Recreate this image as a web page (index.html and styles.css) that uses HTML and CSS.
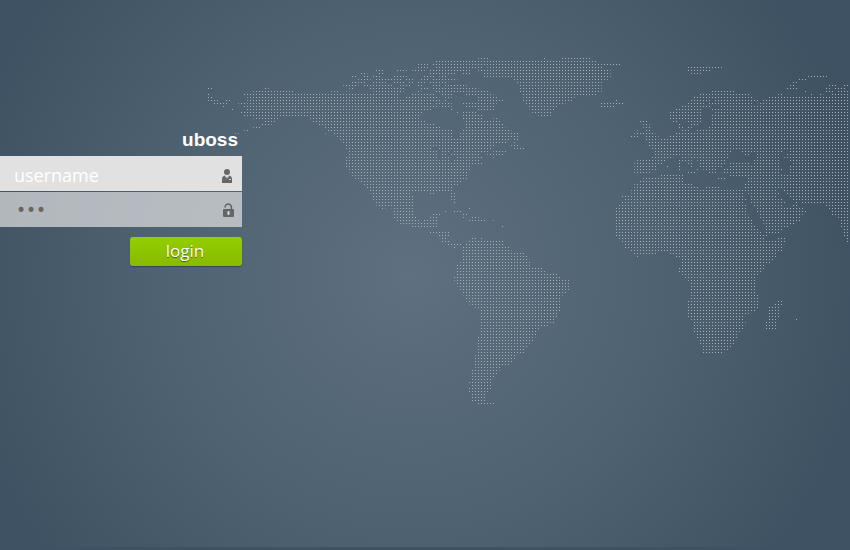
FILE: index.html
```html
<!DOCTYPE html>
<html lang="en">
<head>
<meta charset="utf-8">
<title>uboss</title>
<link rel="stylesheet" href="styles.css">
</head>
<body>
<main class="page">
<svg class="map" width="850" height="550" viewBox="0 0 850 550" aria-hidden="true">
<defs>
<pattern id="dots" width="3" height="3" patternUnits="userSpaceOnUse"><rect x="1" y="1" width="1" height="1" fill="#a3afb8"/></pattern>
<mask id="land" maskUnits="userSpaceOnUse" x="0" y="0" width="850" height="550">
<!-- Alaska and the west coast -->
<g transform="translate(200 50) scale(.333333)">
<path class="area" d="M130 129H600V525H637L610 520 592 514 583 504V478L560 470H583L546 478 527 465 518 450 518 436 509 428 500 412 491 403 482 396 464 388 455 374 446 364 437 352V318L446 310V302L437 294 428 280 419 270 412 260 400 252 385 244 374 234 356 225 338 216 328 201H131V184H140V174H131V165H142V138H130Z"/>
<path class="run" d="M24 115H36M24 133H27M24 142H36M24 151H54M72 151H92M42 160H82M69 169H73M96 178H100M115 160H135M123 187H140M160 124H281M195 115H206M160 205H235M195 214H228M186 223H215M160 232H181M133 241H145M106 250H116M376 250H380M394 124H418M520 124H575M592 124H610M440 124H448M430 106H475M448 115H460M455 97H500M455 79H470M482 70H502M475 88H512M490 79H505M528 61H550M536 70H550M518 79H545M528 88H570M515 97H550M492 106H580M510 115H600M590 61H606M600 88H606"/>
</g>
<!-- Canada, Greenland, the United States and Mexico -->
<g transform="translate(400 50) scale(.333333)">
<path class="area" d="M323 66 340 30H485V21H572L575 30 605 39V48L608 55 620 57 632 60V86L610 93 605 101V125L585 138H528L515 155 480 165 460 182 450 200H430L400 191 385 174 368 155 370 142 360 126 352 100 340 92V84H325Z"/>
<path class="run" d="M235 25H265M430 25H440M108 34H365M54 43H90M99 43H350M600 43H662M54 52H90M108 52H120M126 52H250M262 52H345M0 61H20M36 61H38M45 61H74M90 61H210M235 61H345M90 70H170M189 70H210M250 70H345M-20 79H20M72 79H102M118 79H140M250 79H340M-40 88H0M18 88H40M63 88H84M99 88H172M-65 97H-40M-20 97H12M27 97H40M54 97H80M90 97H145M0 106H30M54 106H70M99 106H120M135 106H200M-65 115H-20M0 115H18M63 115H84M99 115H235M-35 124H4M54 124H64M108 124H200M207 124H270M-60 133H0M36 133H102M126 133H160M198 133H280M-80 142H0M18 142H118M135 142H155M228 142H292M-80 151H60M63 151H122M130 151H142M234 151H312M-80 160H100M108 160H155M189 160H290M-80 169H118M126 169H155M198 169H288M-80 178H94M150 178H158M232 178H282M-80 187H66M171 187H175M189 187H230M-80 196H57M189 196H246M-80 205H57M189 205H250M280 205H294M-80 214H76M198 214H306M-80 223H103M198 223H312M-80 232H122M198 232H316M-80 241H156M189 241H334M-80 250H156M180 250H354M-80 259H156M180 259H354M-80 268H330M342 268H357M-80 277H322M342 277H350M-80 286H288M334 286H354M-80 295H94M117 295H276M342 295H373M-80 304H112M126 304H150M160 304H265M280 304H318M-80 313H115M126 313H140M152 313H240M262 313H310M-80 322H115M126 322H150M171 322H252M280 322H284M-80 331H150M160 331H240M-80 340H247M-80 349H215M-80 358H210M-80 367H204M-80 376H204M-80 385H202M-80 394H184M-80 403H177M-80 412H157M-80 421H157M-80 430H30M90 430H103M153 430H166M-80 439H40M153 439H166M-80 448H40M153 448H166M-17 457H40M162 457H166M-17 466H40M-17 475H40M207 475H210M-17 484H40M135 484H139M162 484H184M-17 493H40M99 493H120M189 493H202M-17 502H50M90 502H112M189 502H195M216 502H236M-10 511H58M72 511H112M207 511H211M216 511H255M280 511H285M10 520H112M36 529H112M305 529H310M603 169H644M603 160H670M648 151H653"/>
</g>
<!-- Europe and western Asia -->
<g transform="translate(600 50) scale(.333333)">
<path class="run" d="M264 52H367M264 61H330M273 70H305M624 79H684M597 88H618M579 97H591M570 106H582M561 115H591M615 124H619M687 106H714M732 106H750M678 115H696M705 115H741M678 124H700M714 124H750M633 133H637M660 133H670M696 133H750M330 124H405M300 133H450M535 133H547M282 142H340M345 142H460M507 142H750M273 151H330M345 151H475M489 151H750M264 160H312M326 160H462M473 160H750M246 169H330M363 169H750M228 178H304M336 178H750M210 187H304M345 187H750M210 196H304M336 196H750M210 205H304M336 205H750M219 214H232M264 214H304M336 214H750M237 223H241M273 223H295M336 223H750M237 232H255M264 232H278M326 232H750M246 241H268M290 241H750M228 250H750M210 259H750M183 268H750M165 277H750M156 286H750M156 295H750M165 304H396M424 304H550M567 304H750M165 313H390M433 313H450M470 313H540M560 313H750M155 322H220M246 322H258M265 322H385M470 322H540M553 322H750M108 331H195M237 331H275M292 331H378M462 331H540M570 331H750M103 340H186M237 340H241M264 340H280M300 340H378M390 340H450M460 340H540M575 340H750M103 349H168M200 349H204M237 349H241M273 349H277M300 349H367M385 349H540M570 349H750M103 358H168M237 358H241M290 358H300M310 358H350M367 358H547M570 358H750M103 367H151M264 367H287M325 367H349M365 367H540M570 367H750M183 376H250M385 376H750M130 385H250M354 385H376M440 385H750M120 394H250M440 394H750M103 403H280M435 403H750M103 412H300M318 412H358M435 412H750M94 421H530M549 421H750M94 430H435M445 430H540M560 430H750M66 439H435M450 439H535M565 439H750M75 448H440M450 448H547M575 448H750M120 214H142M130 223H148M130 232H152M112 241H119M138 241H152M103 250H124M129 250H133M138 250H166M93 259H117M138 259H176M138 268H175M147 277H160M147 286H160"/>
</g>
<!-- Africa, Arabia and India -->
<g transform="translate(600 200) scale(.333333)">
<path class="area" d="M246 200H488L480 216 470 234 466 248V272L475 285V324L458 338 438 345 431 356 438 370 431 388 412 400V415L402 430 393 442 385 452 358 461H308V440L299 430 290 410 281 395V365L264 350 262 320V302L273 292V260L264 240 246 228Z"/>
<path class="run" d="M66 7H432M450 7H555M588 7H592M605 7H750M57 16H438M460 16H548M579 16H592M678 16H750M48 25H438M468 25H610M687 25H750M48 34H441M470 34H618M690 34H750M48 43H445M478 43H608M696 43H750M48 52H447M474 52H603M714 52H750M48 61H457M486 61H603M720 61H750M48 70H460M490 70H585M720 70H750M48 79H465M496 79H568M723 79H750M48 88H475M496 88H552M732 88H750M48 97H484M496 97H538M732 97H750M48 106H502M732 106H750M57 115H492M534 115H556M741 115H750M66 124H556M741 124H750M75 133H547M75 142H547M90 151H547M102 160H170M210 160H530M111 169H115M228 169H530M246 178H520M246 187H511M246 196H493M237 205H493M237 214H484M534 304H547M525 313H547M507 322H538M507 331H538M507 340H538M507 349H538M507 358H530M588 358H592M498 367H530M498 376H530M498 385H529"/>
</g>
<!-- Central and South America -->
<g transform="translate(400 230) scale(.333333)">
<path class="area" d="M189 48H325L338 66H373L382 78 390 92V110H416L436 119 438 128H470L482 144 509 147V180L498 191 480 200 482 240 472 258 463 280 436 290 418 295 409 318 400 332 382 350 373 368 345 375V392L328 405H302L300 420 284 440 274 455V475L265 486 255 492V515H216V492L207 485V470L216 465V420L225 410V378L234 366V320L243 310V245L234 235 216 230 207 222 198 212 196 200 189 195 180 180 170 165 162 150V138H171V105L180 98 189 90Z"/>
<path class="run" d="M90 7H150M117 16H148M126 25H140M216 25H229M243 25H250M126 34H148M207 34H312M144 43H185M198 43H312M162 52H166M207 457H220M234 520H282"/>
</g>
</mask>
</defs>
<rect width="850" height="550" fill="url(#dots)" mask="url(#land)"/>
</svg>
<form class="login">
<h1 class="brand">uboss</h1>
<div class="field field-user">
<input class="text" type="text" placeholder="username" aria-label="Username">
<svg class="icon" width="12" height="14" viewBox="0 0 12 14" aria-hidden="true"><circle cx="6" cy="3" r="3" fill="#666"/><path fill="#666" d="M1 10Q1 7 4 6.500L6 9 8 6.500Q11 7 11 10V14H1Z"/><path fill="#ccc" d="M4 7L5 7 5.500 10ZM8 7L7 7 6.500 10ZM8 10H10V11H8Z"/></svg>
</div>
<div class="field field-pass">
<input class="text secret" type="password" value="abc" aria-label="Password">
<svg class="icon" width="12" height="14" viewBox="0 0 12 14" aria-hidden="true"><path fill="none" stroke="#666" stroke-width="1.6" d="M3 4.500A3.200 3.500 0 0 1 9.400 4.500V6"/><rect x="1" y="6" width="11" height="8" rx="1" fill="#666"/><rect x="5.500" y="8" width="2" height="4" rx="1" fill="#e0e3e5"/></svg>
</div>
<button class="submit" type="submit">login</button>
</form>
</main>
</body>
</html>
```
FILE: styles.css
```css
* {
  box-sizing: border-box;
}

body {
  margin: 0;
  font-family: "Open Sans", "Noto Sans", sans-serif;
  background: #3e5262;
}

.page {
  display: grid;
  min-height: 100vh;
  overflow: hidden;
  background: radial-gradient(circle at 410px 275px, #5f7080 0, #4e6271 250px, #3f5263 460px);
  border-bottom: 3px solid #3e5264;
}

.map,
.login {
  grid-area: 1 / 1;
}

.map {
  display: block;
  margin-bottom: -3px;
}

.area {
  fill: #fff;
}

.run {
  fill: none;
  stroke: #fff;
  stroke-width: 9;
}

.login {
  z-index: 1;
  display: flex;
  flex-direction: column;
  align-self: start;
  width: 242px;
  padding-top: 128px;
}

.brand {
  margin: 0;
  padding-right: 4px;
  font: bold 19px/24px "Liberation Sans", Arial, sans-serif;
  text-align: right;
  color: #fff;
}

.field {
  display: flex;
  align-items: center;
  height: 35px;
  padding: 0 8px 0 14px;
}

.field-user {
  margin-top: 4px;
  padding-right: 9px;
  background: #e1e1e1;
}

.field-user .icon {
  margin-top: 5px;
}

.field-pass {
  margin-top: 1px;
  padding-left: 16px;
  background: rgba(225, 225, 225, 0.7);
}

.text {
  flex: 1;
  min-width: 0;
  height: 35px;
  padding: 2px 0 0;
  border: 0;
  outline: 0;
  background: none;
  font: 18px "Open Sans", "Noto Sans", sans-serif;
  color: #666;
}

.text::placeholder {
  color: #fff;
  opacity: 1;
}

.secret {
  padding: 0;
  font: 17px "DejaVu Sans", sans-serif;
}

.icon {
  flex: none;
}

.submit {
  align-self: flex-end;
  width: 112px;
  height: 29px;
  margin-top: 10px;
  padding: 0 2px 2px 0;
  border: 0;
  border-radius: 3px;
  background: linear-gradient(#93ce00, #87bb00);
  box-shadow: 0 1px 1px rgba(40, 50, 60, 0.6);
  font: 17px/24px "Open Sans", "Noto Sans", sans-serif;
  color: #fff;
  text-shadow: 0 1px 1px rgba(0, 0, 0, 0.5);
}
```
